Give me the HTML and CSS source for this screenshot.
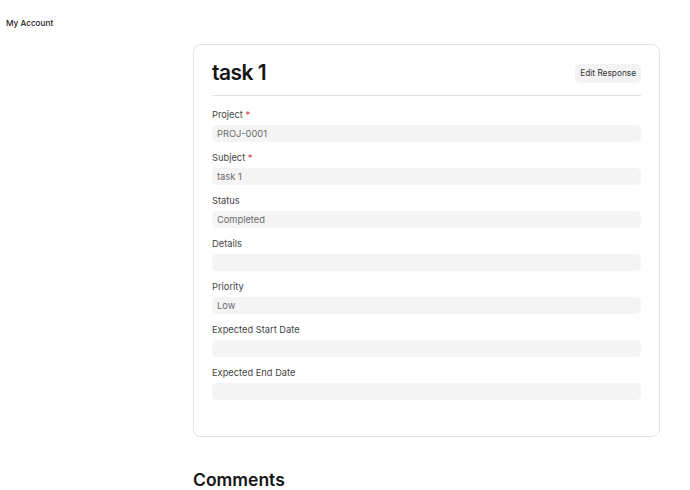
FILE: index.html
```html
<!DOCTYPE html>
<html lang="en">
<head>
    <meta charset="UTF-8">
    <meta name="viewport" content="width=device-width, initial-scale=1.0">
    <title>task 1</title>
    <link rel="stylesheet" href="styles.css">
</head>
<body>
    <div class="navbar">My Account</div>

    <div class="page">
        <div class="form-card">
            <div class="form-header">
                <h1>task 1</h1>
                <button class="btn-edit">Edit Response</button>
            </div>

            <div class="field">
                <label>Project <span class="reqd">*</span></label>
                <div class="control">PROJ-0001</div>
            </div>
            <div class="field">
                <label>Subject <span class="reqd">*</span></label>
                <div class="control">task 1</div>
            </div>
            <div class="field">
                <label>Status</label>
                <div class="control">Completed</div>
            </div>
            <div class="field">
                <label>Details</label>
                <div class="control"></div>
            </div>
            <div class="field">
                <label>Priority</label>
                <div class="control">Low</div>
            </div>
            <div class="field">
                <label>Expected Start Date</label>
                <div class="control"></div>
            </div>
            <div class="field">
                <label>Expected End Date</label>
                <div class="control"></div>
            </div>
        </div>

        <h2 class="comments-title">Comments</h2>
    </div>
</body>
</html>
```

FILE: styles.css
```css
/* Web form: read-only view */
body {
    font-family: Inter, "Noto Sans", sans-serif;
    margin: 0;
    background: #fff;
    color: #1f1f1f;
}
.navbar {
    padding: 17px 6px 0;
    font-size: 8.2px;
    font-weight: 500;
    line-height: 12px;
    color: #222;
}
.page {
    width: 467px;
    margin: 15px 0 0 193px;
}
.form-card {
    border: 1px solid #e2e2e2;
    border-radius: 8px;
    padding: 18px 18px 26px;
}
.form-header {
    display: flex;
    justify-content: space-between;
    align-items: center;
    padding-bottom: 12px;
    border-bottom: 1px solid #e2e2e2;
    margin-bottom: 13px;
}
h1 {
    margin: 0;
    font-size: 21px;
    font-weight: 600;
    line-height: 20px;
    letter-spacing: -0.5px;
    color: #151515;
}
.btn-edit {
    font-family: inherit;
    font-size: 8.3px;
    line-height: 11px;
    padding: 4px 5px;
    border: none;
    border-radius: 5px;
    background: #f3f3f3;
    color: #333;
    margin-top: 1px;
}
.field {
    margin-bottom: 10px;
}
.field label {
    display: block;
    font-size: 9.3px;
    line-height: 12px;
    color: #444;
    margin-bottom: 4px;
}
.reqd {
    color: #e03636;
}
.control {
    height: 17px;
    line-height: 17px;
    padding: 0 5px;
    border-radius: 5px;
    background: #f4f4f4;
    font-size: 9.3px;
    color: #6b6b6b;
}
.comments-title {
    margin: 31px 0 0;
    font-size: 17.5px;
    font-weight: 600;
    line-height: 24px;
    color: #151515;
}
```
